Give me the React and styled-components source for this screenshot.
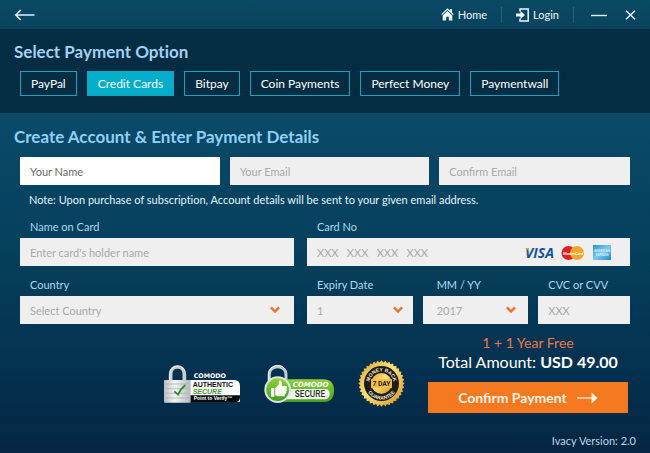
import styled, { createGlobalStyle } from "styled-components";

const GlobalStyle = createGlobalStyle`
  * {
    box-sizing: border-box;
  }

  body {
    margin: 0;
    font-family: Lato, "Open Sans", sans-serif;
    font-variant-ligatures: none;
    color: white;
  }

  button,
  input,
  select {
    font-family: inherit;
  }
`;

const Container = styled.div`
  min-height: 100vh;
  display: flex;
  flex-direction: column;
`;

const TopBar = styled.header`
  height: 29px;
  padding: 0 14px;
  display: flex;
  align-items: center;
  justify-content: space-between;
  background: linear-gradient(#0a4965, #08425e);
`;

const Nav = styled.nav`
  display: flex;
  align-items: center;
`;

const NavLink = styled.a`
  display: flex;
  align-items: center;
  gap: 4px;
  color: #eef8ff;
  font-size: 11px;
  line-height: 16px;
  text-decoration: none;
`;

const Divider = styled.span`
  width: 1px;
  height: 16px;
  margin: 0 14px;
  background-color: #2c647e;
`;

const IconButton = styled.button`
  display: flex;
  padding: 0;
  border: none;
  background: none;
  color: #dceffa;
  cursor: pointer;
`;

const WindowButtons = styled.div`
  display: flex;
  align-items: center;
  gap: 18px;
  padding-left: 3px;
`;

const Options = styled.section`
  padding: 13px 14px 17px;
  background-color: #042c42;
`;

const Title = styled.h2`
  margin: 0;
  font-size: 17px;
  line-height: 20px;
  font-weight: 700;
  color: ${(props) => props.$color};
`;

const OptionList = styled.div`
  display: flex;
  flex-wrap: wrap;
  gap: 10px;
  padding: 9px 6px 0;
`;

const Option = styled.button`
  height: 25px;
  padding: 0 10px;
  border: 1px solid #16a3bd;
  background-color: ${(props) => (props.$active ? "#04aecb" : "transparent")};
  color: white;
  font-size: 12px;
  cursor: pointer;
`;

const Details = styled.main`
  flex: 1;
  display: flex;
  flex-direction: column;
  padding: 14px 14px 4px;
  background: linear-gradient(#0a4a68, #05405d 40%, #03304e 78%, #052542);
`;

const Form = styled.form`
  padding: 10px 6px 0;
`;

const Row = styled.div`
  display: grid;
  grid-template-columns: ${(props) => props.$columns};
  gap: ${(props) => props.$gap || "10px"};
`;

const Field = styled.div`
  min-width: 0;
  display: flex;
  flex-direction: column;
`;

const Label = styled.label`
  padding: 0 ${(props) => props.$indent || "10px"};
  font-size: 11px;
  line-height: 16px;
  margin-bottom: 3px;
  color: #a9dbf2;
`;

const Input = styled.input`
  width: 100%;
  min-width: 0;
  height: 28px;
  padding: 0 10px;
  border: none;
  border-radius: 0;
  outline: none;
  background-color: ${(props) => (props.$focused ? "white" : "#efefef")};
  color: #6d6d6d;
  font-size: 11px;

  &::placeholder {
    color: ${(props) => (props.$focused ? "#6d6d6d" : "#a9a9a9")};
    opacity: 1;
  }
`;

const CardBox = styled.div`
  display: flex;
  align-items: center;
  padding-right: 16px;
  background-color: #efefef;
`;

const SelectBox = styled.div`
  position: relative;

  svg {
    position: absolute;
    top: 10px;
    right: ${(props) => props.$arrow || "10px"};
    pointer-events: none;
  }
`;

const Select = styled.select`
  width: 100%;
  height: 28px;
  padding: 0 ${(props) => props.$indent || "10px"};
  border: none;
  border-radius: 0;
  appearance: none;
  background-color: #efefef;
  color: #a9a9a9;
  font-size: 11px;
`;

const Note = styled.p`
  margin: 7px 9px 11px;
  font-size: 11px;
  line-height: 16px;
  color: #e3f3fb;
`;

const Bottom = styled.div`
  display: flex;
  justify-content: flex-end;
  padding: 10px 8px 0 0;
`;

const Badges = styled.div`
  display: flex;
  align-items: center;
  gap: 23px;
  padding: 20px 23px 0 0;
`;

const Summary = styled.div`
  width: 200px;
  text-align: center;
`;

const Offer = styled.p`
  margin: 0;
  font-size: 14px;
  line-height: 18px;
  color: #e8784a;
`;

const Total = styled.p`
  margin: 0 0 10px;
  font-size: 16px;
  line-height: 20px;
  white-space: nowrap;
`;

const ConfirmButton = styled.button`
  width: 100%;
  height: 31px;
  display: flex;
  align-items: center;
  justify-content: center;
  gap: 10px;
  border: none;
  background-color: #f57921;
  color: #fff3e2;
  font-size: 14px;
  font-weight: 700;
  cursor: pointer;
`;

const Version = styled.footer`
  margin-top: auto;
  font-size: 11px;
  line-height: 16px;
  text-align: right;
  color: #b3d9f0;
`;

const BackIcon = () => (
  <svg width="21" height="12" viewBox="0 0 21 12" fill="none" stroke="currentColor" strokeWidth="1.6">
    <path d="M20.5 6H2M6.8 1 1.8 6l5 5" />
  </svg>
);

const HomeIcon = () => (
  <svg width="13" height="13" viewBox="0 0 13 13" fill="currentColor">
    <path d="M6.5.3 9 2.6V1h2v3.5l1.8 1.8-.8.8L6.5 1.9 1 7.1l-.8-.8z" />
    <path d="m6.5 3 4.8 4.5v5H7.8V8.7H5.2v3.8H1.7v-5z" />
  </svg>
);

const LoginIcon = () => (
  <svg width="13" height="14" viewBox="0 0 13 14">
    <path d="M4 3.5V1h8.2v12H4v-2.5" fill="none" stroke="currentColor" strokeWidth="1.5" />
    <path d="M0 5.4h4.4V2.8L9 7l-4.6 4.2V8.6H0z" fill="currentColor" />
  </svg>
);

const MinimizeIcon = () => (
  <svg width="16" height="10" viewBox="0 0 16 10" stroke="currentColor" strokeWidth="1.4">
    <path d="M0 5.5h16" />
  </svg>
);

const CloseIcon = () => (
  <svg width="11" height="10" viewBox="0 0 11 10" stroke="currentColor" strokeWidth="1.5">
    <path d="m1 .7 9 8.6M10 .7 1 9.3" />
  </svg>
);

const Chevron = () => (
  <svg width="10" height="8" viewBox="0 0 10 8" fill="none" stroke="#ee7130" strokeWidth="2.4">
    <path d="m.9 1.3 4.1 4.3 4.1-4.3" />
  </svg>
);

const ArrowIcon = () => (
  <svg width="21" height="12" viewBox="0 0 21 12">
    <path d="M0 6h15" stroke="currentColor" strokeWidth="1.2" />
    <path d="M14.5.6 20.6 6l-6.1 5.4z" fill="currentColor" />
  </svg>
);

const LogoStrip = styled.svg`
  flex-shrink: 0;
`;

const CardLogos = () => (
  <LogoStrip width="90" height="18" viewBox="0 0 90 18">
    <defs>
      <linearGradient id="amex" x1="0" y1="0" x2="1" y2="1">
        <stop offset="0" stopColor="#2795d2" />
        <stop offset="0.5" stopColor="#7cc8ec" />
        <stop offset="1" stopColor="#2389c8" />
      </linearGradient>
    </defs>
    <text x="1" y="15" fontFamily="Open Sans" fontSize="14" fontWeight="700" fontStyle="italic" fill="#17539b">
      VISA
    </text>
    <path d="M.5 5h3.7l1.4 4.4C4.5 7.4 2.8 6 .5 5z" fill="#e9a23a" />
    <circle cx="44.5" cy="10" r="7" fill="#e0201f" />
    <circle cx="53" cy="10" r="7" fill="#f4a52b" />
    <text x="49" y="12" textAnchor="middle" fontFamily="Lato" fontSize="4" fontWeight="900" fontStyle="italic" fill="white">
      MasterCard
    </text>
    <rect x="69" y="2" width="18" height="15" fill="url(#amex)" />
    <text x="78" y="9" textAnchor="middle" fontFamily="Lato" fontSize="3" fontWeight="900" fill="#d8f0fb">
      AMERICAN
    </text>
    <text x="78" y="13" textAnchor="middle" fontFamily="Lato" fontSize="3" fontWeight="900" fill="#d8f0fb">
      EXPRESS
    </text>
  </LogoStrip>
);

const AuthenticBadge = () => (
  <svg width="78" height="40" viewBox="0 0 234 120">
    <defs>
      <linearGradient id="steel" x1="0" x2="1">
        <stop offset="0" stopColor="#b9bdbf" />
        <stop offset="0.4" stopColor="#f4f5f5" />
        <stop offset="1" stopColor="#b4b8ba" />
      </linearGradient>
    </defs>
    <path d="M23 54V30c0-28 41-28 41 0v24" fill="none" stroke="#c9cdd0" strokeWidth="11" />
    <path d="M20 50V30C20 2 60-2 66 24" fill="none" stroke="#f3f5f6" strokeWidth="3" />
    <path d="M78 48h135q18 0 18 18v47H78z" fill="white" />
    <path d="M78 94h153v6q0 14-14 14H78z" fill="#060a0c" />
    <rect x="3" y="48" width="80" height="68" rx="3" fill="url(#steel)" />
    <path d="M8 60h70M8 74h70M8 88h70M8 102h70" stroke="#a6aaac" strokeWidth="2" />
    <path d="m34 82 11 10c6-14 13-22 22-29" fill="none" stroke="#2b8a25" strokeWidth="5" />
    <text x="92" y="43" fontFamily="DejaVu Sans" fontSize="19" fontWeight="700" fill="white">
      COMODO
    </text>
    <text x="89" y="69" fontFamily="Liberation Sans" fontSize="21" fontWeight="700" fill="#111">
      AUTHENTIC
    </text>
    <text x="89" y="90" fontFamily="Liberation Sans" fontSize="21" fontWeight="700" fontStyle="italic" fill="#3f9a28">
      SECURE
    </text>
    <text x="92" y="109" fontFamily="Liberation Sans" fontSize="15" fontWeight="700" fill="white">
      Point to Verify™
    </text>
  </svg>
);

const SecureBadge = () => (
  <svg width="71" height="40" viewBox="0 0 213 120">
    <defs>
      <linearGradient id="lime" x1="0" y1="0" x2="0" y2="1">
        <stop offset="0" stopColor="#8ed33a" />
        <stop offset="1" stopColor="#3f9f1c" />
      </linearGradient>
    </defs>
    <path d="M16 58V32c0-32 50-32 50 0v26" fill="none" stroke="#c4cbd2" strokeWidth="9" />
    <path d="M13 48V31C14 4 48-3 60 12" fill="none" stroke="#f6f8fa" strokeWidth="3" />
    <path d="M48 46h129q33 0 33 34t-33 34H60z" fill="url(#lime)" />
    <path d="M66 75h118q13 0 13 14t-13 17H66z" fill="#f1f5ea" />
    <circle cx="41" cy="77" r="40" fill="#dfe6e3" />
    <circle cx="41" cy="77" r="34" fill="url(#lime)" />
    <path d="M21 72h10v26H21zM34 73l10-11 1-12c7-2 10 4 8 16h11c6 0 6 5 3 8 3 3 2 7-1 8 2 4 0 7-3 8 1 4-1 7-6 7H42l-8-3z" fill="white" />
    <text x="86" y="68" fontFamily="DejaVu Sans" fontSize="21" fontWeight="700" fontStyle="italic" fill="white">
      COMODO
    </text>
    <text x="92" y="100" fontFamily="Roboto" fontSize="25" fontWeight="500" fill="#2d3530">
      SECURE
    </text>
  </svg>
);

const sealPoints = Array.from({ length: 72 }, (_, i) => {
  const r = i % 2 ? 63 : 69;
  const a = (i * Math.PI) / 36;
  return `${70 + r * Math.cos(a)},${70 + r * Math.sin(a)}`;
}).join(" ");

const GuaranteeSeal = () => (
  <svg width="47" height="47" viewBox="0 0 140 140">
    <defs>
      <linearGradient id="gold" x1="0" y1="0" x2="1" y2="1">
        <stop offset="0" stopColor="#e0a12a" />
        <stop offset="0.45" stopColor="#ffe27a" />
        <stop offset="1" stopColor="#d0901d" />
      </linearGradient>
      <path id="seal-top" d="M34 70a36 36 0 0 1 72 0" />
      <path id="seal-bottom" d="M22 70a48 48 0 0 0 96 0" />
    </defs>
    <polygon points={sealPoints} fill="url(#gold)" />
    <circle cx="70" cy="70" r="52" fill="#1d1c1a" />
    <circle cx="70" cy="70" r="31" fill="url(#gold)" />
    <path d="M39 57h62v27H39z" fill="#f2bf45" />
    <g fontFamily="Liberation Sans" fontSize="15" fontWeight="700" fill="#f3ead2" textAnchor="middle">
      <text>
        <textPath href="#seal-top" startOffset="50%">
          MONEY BACK
        </textPath>
      </text>
      <text>
        <textPath href="#seal-bottom" startOffset="50%">
          GUARANTEE
        </textPath>
      </text>
    </g>
    <text x="70" y="77" textAnchor="middle" fontFamily="Roboto" fontSize="20" fontWeight="700" fill="#26221b">
      7 DAY
    </text>
  </svg>
);

const paymentOptions = [
  "PayPal",
  "Credit Cards",
  "Bitpay",
  "Coin Payments",
  "Perfect Money",
  "Paymentwall",
];

const App = () => {
  return (
    <Container>
      <GlobalStyle />
      <TopBar>
        <IconButton aria-label="Back">
          <BackIcon />
        </IconButton>
        <Nav>
          <NavLink href="#home">
            <HomeIcon />
            Home
          </NavLink>
          <Divider />
          <NavLink href="#login">
            <LoginIcon />
            Login
          </NavLink>
          <Divider />
          <WindowButtons>
            <IconButton aria-label="Minimize">
              <MinimizeIcon />
            </IconButton>
            <IconButton aria-label="Close">
              <CloseIcon />
            </IconButton>
          </WindowButtons>
        </Nav>
      </TopBar>
      <Options>
        <Title $color="#a3d0f3">Select Payment Option</Title>
        <OptionList>
          {paymentOptions.map((option) => (
            <Option key={option} $active={option === "Credit Cards"}>
              {option}
            </Option>
          ))}
        </OptionList>
      </Options>
      <Details>
        <Title $color="#8fd0f6">Create Account &amp; Enter Payment Details</Title>
        <Form id="payment">
          <Row $columns="200fr 200fr 191fr">
            <Input $focused aria-label="Your Name" placeholder="Your Name" />
            <Input aria-label="Your Email" type="email" placeholder="Your Email" />
            <Input aria-label="Confirm Email" type="email" placeholder="Confirm Email" />
          </Row>
          <Note>
            Note: Upon purchase of subscription, Account details will be sent to
            your given email address.
          </Note>
          <Row $columns="274fr 323fr" $gap="11px 13px">
            <Field>
              <Label htmlFor="holder">Name on Card</Label>
              <Input id="holder" placeholder="Enter card's holder name" />
            </Field>
            <Field>
              <Label htmlFor="card">Card No</Label>
              <CardBox>
                <Input id="card" placeholder="XXX   XXX   XXX   XXX" />
                <CardLogos />
              </CardBox>
            </Field>
            <Field>
              <Label htmlFor="country">Country</Label>
              <SelectBox $arrow="14px">
                <Select id="country">
                  <option>Select Country</option>
                </Select>
                <Chevron />
              </SelectBox>
            </Field>
            <Row $columns="106fr 106fr 92fr">
              <Field>
                <Label htmlFor="month">Expiry Date</Label>
                <SelectBox>
                  <Select id="month">
                    <option>1</option>
                  </Select>
                  <Chevron />
                </SelectBox>
              </Field>
              <Field>
                <Label htmlFor="year" $indent="14px">
                  MM / YY
                </Label>
                <SelectBox $arrow="12px">
                  <Select id="year" $indent="14px">
                    <option>2017</option>
                  </Select>
                  <Chevron />
                </SelectBox>
              </Field>
              <Field>
                <Label htmlFor="cvc">CVC or CVV</Label>
                <Input id="cvc" placeholder="XXX" />
              </Field>
            </Row>
          </Row>
        </Form>
        <Bottom>
          <Badges>
            <AuthenticBadge />
            <SecureBadge />
            <GuaranteeSeal />
          </Badges>
          <Summary>
            <Offer>1 + 1 Year Free</Offer>
            <Total>
              Total Amount: <b>USD 49.00</b>
            </Total>
            <ConfirmButton form="payment">
              Confirm Payment
              <ArrowIcon />
            </ConfirmButton>
          </Summary>
        </Bottom>
        <Version>Ivacy Version: 2.0</Version>
      </Details>
    </Container>
  );
};

export default App;
